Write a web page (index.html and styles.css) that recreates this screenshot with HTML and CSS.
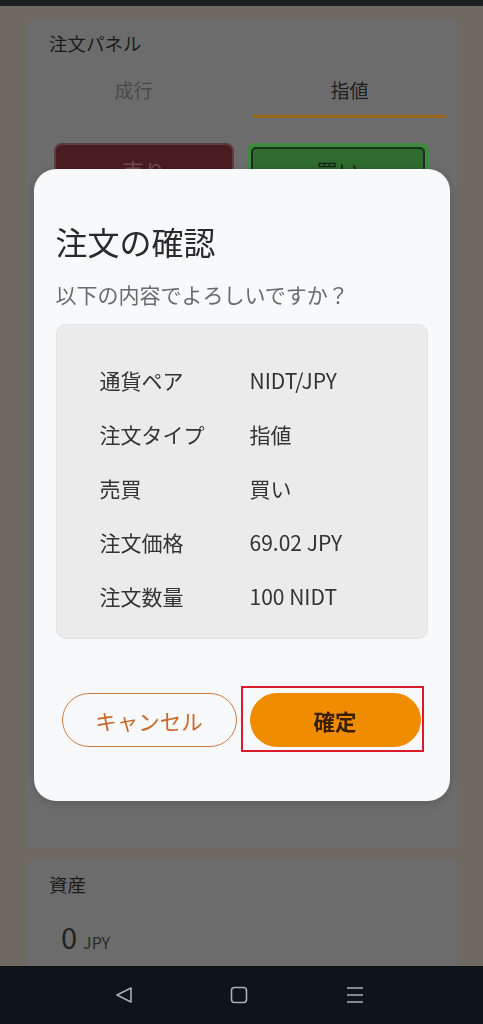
FILE: index.html
```html
<!DOCTYPE html>
<html lang="ja">
<head>
<meta charset="utf-8">
<link rel="stylesheet" href="styles.css">
</head>
<body>
<div class="statusbar"></div>
<main class="page">
  <section class="panel order-panel">
    <h2 class="panel-title">注文パネル</h2>
    <div class="tabs">
      <div class="tab">成行</div>
      <div class="tab active">指値</div>
    </div>
    <div class="side-buttons">
      <div class="side sell">売り</div>
      <div class="side buy"><span>買い</span></div>
    </div>
  </section>
  <section class="panel asset-panel">
    <h2 class="panel-title">資産</h2>
    <div class="asset"><span class="amount">0</span><span class="unit">JPY</span></div>
  </section>
</main>
<nav class="navbar">
  <svg class="nav-icon" width="18" height="18" viewBox="0 0 18 18"><path d="M16 2 L2 9 L16 16 Z" fill="none" stroke="#a9afb3" stroke-width="1.6" stroke-linejoin="round"/></svg>
  <svg class="nav-icon" width="18" height="18" viewBox="0 0 18 18"><rect x="1.5" y="1.5" width="15" height="15" rx="3" fill="none" stroke="#a9afb3" stroke-width="1.6"/></svg>
  <svg class="nav-icon" width="20" height="18" viewBox="0 0 20 18"><path d="M2 2 H18 M2 9 H18 M2 16 H18" stroke="#a9afb3" stroke-width="1.6"/></svg>
</nav>

<div class="overlay">
  <div class="dialog">
    <h1 class="dialog-title">注文の確認</h1>
    <p class="dialog-sub">以下の内容でよろしいですか？</p>
    <div class="summary">
      <div class="row"><span class="label">通貨ペア</span><span class="value">NIDT/JPY</span></div>
      <div class="row"><span class="label">注文タイプ</span><span class="value">指値</span></div>
      <div class="row"><span class="label">売買</span><span class="value">買い</span></div>
      <div class="row"><span class="label">注文価格</span><span class="value">69.02 JPY</span></div>
      <div class="row"><span class="label">注文数量</span><span class="value">100 NIDT</span></div>
    </div>
    <div class="actions">
      <button class="btn cancel">キャンセル</button>
      <button class="btn confirm">確定<span class="highlight"></span></button>
    </div>
  </div>
</div>
</body>
</html>
```

FILE: styles.css
```css
* { box-sizing: border-box; }
html, body { margin: 0; padding: 0; }
body {
  width: 483px;
  height: 1024px;
  overflow: hidden;
  background: #6e6961;
  font-family: "Noto Sans CJK JP", "Noto Sans", sans-serif;
  display: flex;
  flex-direction: column;
}
.statusbar { height: 6px; background: #1a1f23; flex: none; }
.page {
  flex: 1;
  padding: 14px 26px 0 27px;
  display: flex;
  flex-direction: column;
  gap: 12px;
  overflow: hidden;
}
.panel { background: #6c6c6c; flex: none; }
.order-panel { height: 828px; padding: 10px 0 0 22px; }
.asset-panel { flex: 1; padding: 11px 0 0 22px; }
.panel-title {
  margin: 0;
  font-size: 18.5px;
  font-weight: 400;
  line-height: 26px;
  color: #1b1b1b;
}
.tabs {
  display: flex;
  gap: 23px;
  margin: 10px 0 0 -12px;
  width: 409px;
}
.tab {
  flex: 1;
  text-align: center;
  font-size: 19px;
  line-height: 26px;
  padding: 11px 0 12px;
  color: #4a4a4a;
  border-bottom: 3px solid transparent;
}
.tab.active { color: #1f1f1f; border-bottom-color: #9c6418; }
.side-buttons {
  display: flex;
  gap: 13px;
  margin: 25px 0 0 5px;
  width: 375px;
}
.side {
  height: 54px;
  border-radius: 8px;
  font-size: 22px;
  line-height: 50px;
  text-align: center;
}
.sell {
  flex: 182;
  background: #4a1c21;
  border: 2px solid #5c3d40;
  color: #6e4b4d;
}
.buy {
  flex: 180;
  background: #3d8a3d;
  padding: 4px;
}
.buy span {
  display: block;
  height: 100%;
  background: #2f6a2f;
  border: 2px solid #17311a;
  border-radius: 5px;
  color: #142414;
  line-height: 42px;
}
.asset { margin: 20px 0 0 12px; color: #222; }
.amount { font-size: 29px; line-height: 38px; margin-right: 6px; }
.unit { font-size: 16px; color: #2a2a2a; }
.navbar {
  height: 58px;
  flex: none;
  background: #0e1519;
  display: flex;
  align-items: center;
  justify-content: center;
  gap: 97px;
  position: relative;
  z-index: 3;
  padding-right: 4px;
}
.nav-icon { display: block; }

.overlay {
  position: fixed;
  top: 6px;
  bottom: 58px;
  left: 0;
  right: 0;
  display: flex;
  justify-content: center;
  align-items: flex-start;
  padding-top: 163px;
  z-index: 2;
}
.dialog {
  width: 416px;
  background: #f8f9fb;
  border-radius: 22px;
  padding: 52px 22px 54px;
  box-shadow: 0 2px 8px rgba(0,0,0,0.15);
}
.dialog-title {
  margin: 0;
  font-size: 32px;
  font-weight: 400;
  line-height: 40px;
  color: #2a2a2a;
}
.dialog-sub {
  margin: 19px 0 0;
  font-size: 21px;
  line-height: 28px;
  color: #6a6a6a;
}
.summary {
  margin-top: 16px;
  background: #ebebeb;
  border: 1px solid #e2e2e2;
  border-radius: 10px;
  padding: 28px 0 15px 43px;
}
.row {
  display: flex;
  height: 54px;
  align-items: center;
  font-size: 21px;
  color: #333;
}
.label { width: 150px; }
.actions {
  display: flex;
  gap: 13px;
  margin: 54px 7px 0 6px;
}
.btn {
  height: 54px;
  border-radius: 27px;
  font-family: inherit;
  font-size: 21.5px;
  cursor: pointer;
  padding: 0;
}
.cancel {
  flex: 174;
  background: #f8f9fb;
  border: 1.5px solid #cf7a3e;
  color: #c8682a;
  font-weight: 400;
}
.confirm {
  flex: 172;
  background: #f08c00;
  border: none;
  color: #3a2000;
  font-weight: 700;
  position: relative;
}
.highlight {
  position: absolute;
  left: -9px;
  right: -3px;
  top: -7px;
  bottom: -5px;
  border: 2.5px solid #dc1a2c;
  pointer-events: none;
}
```
